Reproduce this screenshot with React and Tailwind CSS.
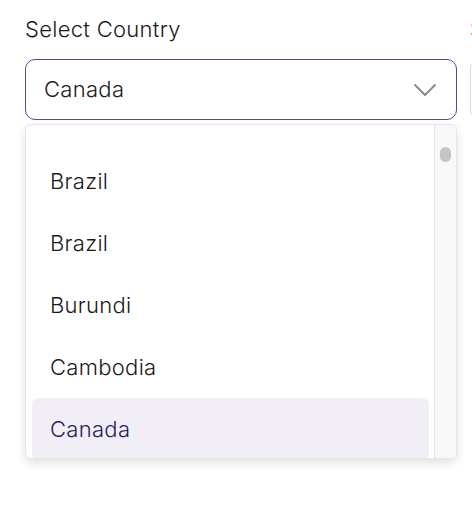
import React from "react";

const font = { fontFamily: "Inter, 'Noto Sans', sans-serif" };

function Chevron() {
  return (
    <svg width="24" height="14" viewBox="0 0 24 14" fill="none">
      <path d="M2 2 L12 12 L22 2" stroke="#8a8a8a" strokeWidth="2" strokeLinecap="round" strokeLinejoin="round" />
    </svg>
  );
}

export default function App() {
  const items = ["Botswana", "Brazil", "Brazil", "Burundi", "Cambodia", "Canada"];
  return (
    <div className="w-[472px] h-[512px] overflow-hidden bg-white font-light tracking-[0.3px]" style={font}>
      <div className="flex gap-[13px] pl-[25px] pt-[15px]">
        <div className="w-[432px] shrink-0">
          <div className="text-[22px] leading-[28px] text-[#1a1a1a] whitespace-nowrap">Select Country</div>
          <div className="mt-[16px] h-[61px] rounded-[10px] border border-[#5b44a6] flex items-center justify-between pl-[18px] pr-[19px]">
            <span className="text-[22px] text-[#1a1a1a]">Canada</span>
            <Chevron />
          </div>
          <div className="mt-[4px] h-[335px] rounded-[6px] border border-[#e6e6e6] shadow-[0_4px_10px_rgba(0,0,0,0.12)] flex overflow-hidden bg-white">
            <div className="flex-1 overflow-hidden pl-[6px] pr-[5px]">
              <div className="-mt-[37px]">
                {items.map((it, i) => (
                  <div
                    key={i}
                    className={
                      i === items.length - 1
                        ? "h-[62px] flex items-center px-[18px] rounded-[6px] bg-[#f1eff5] text-[22px] text-[#2a2160]"
                        : i === 0
                        ? "h-[62px] flex items-center px-[18px] pb-[7px] text-[22px] text-[#9a9a9a]"
                        : "h-[62px] flex items-center px-[18px] text-[22px] text-[#1a1a1a]"
                    }
                  >
                    {it}
                  </div>
                ))}
              </div>
            </div>
            <div className="w-[22px] border-l border-[#e6e6e6] bg-[#f8f8f8] pt-[22px] flex justify-center">
              <div className="w-[11px] h-[15px] rounded-full bg-[#c4c4c4]"></div>
            </div>
          </div>
        </div>
        <div className="w-[432px] shrink-0">
          <div className="text-[22px] leading-[28px] text-[#1a1a1a] whitespace-nowrap">Select State</div>
          <div className="mt-[16px] h-[61px] rounded-[10px] border border-[#d9d9d9]"></div>
        </div>
      </div>
    </div>
  );
}
